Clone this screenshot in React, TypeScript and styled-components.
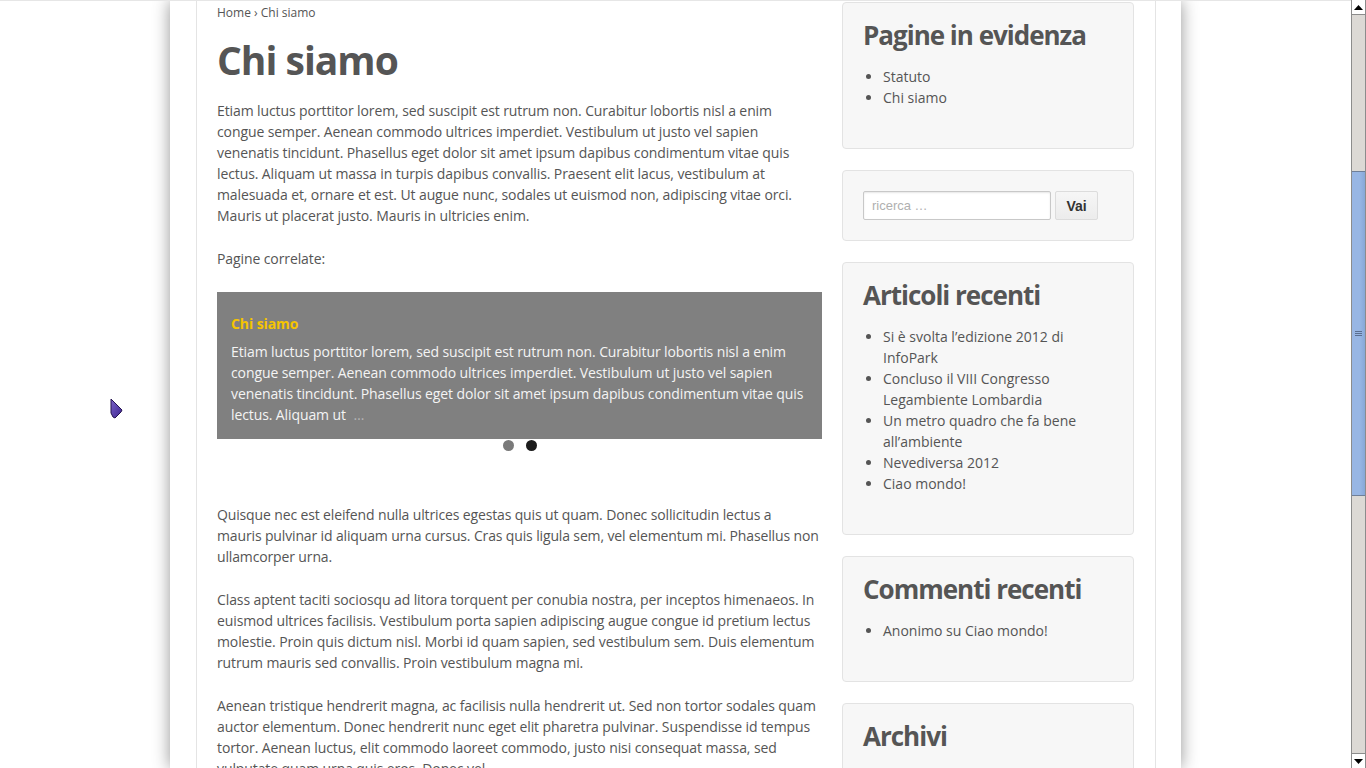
import React from "react";
import styled, { createGlobalStyle } from "styled-components";

const GlobalStyle = createGlobalStyle`
  html, body {
    margin: 0;
    padding: 0;
    height: 768px;
    overflow: hidden;
    background: #ffffff;
  }
  body {
    font-family: "Open Sans", "DejaVu Sans", sans-serif;
    color: #555555;
  }
  * { box-sizing: border-box; }
`;

const Screen = styled.div`
  display: flex;
  flex-direction: row;
  width: 1366px;
  height: 768px;
  position: relative;
`;

const Viewport = styled.div`
  flex: 1;
  display: flex;
  justify-content: center;
  border-top: 1px solid #e6e6e6;
  overflow: hidden;
  background: #ffffff;
`;

const Shell = styled.div`
  width: 1011px;
  padding: 0 25px 0 26px;
  background: #ffffff;
  box-shadow: 0 0 16px rgba(0, 0, 0, 0.42);
  flex-shrink: 0;
`;

const Inner = styled.div`
  display: flex;
  flex-direction: row;
  gap: 20px;
  width: 960px;
  height: 100%;
  padding-left: 20px;
  border-left: 1px solid #e4e4e4;
  border-right: 1px solid #e4e4e4;
`;

const Main = styled.main`
  width: 605px;
  flex-shrink: 0;
  font-size: 14px;
  line-height: 21px;
`;

const Breadcrumb = styled.div`
  margin-top: 3px;
  font-size: 12px;
  line-height: 18px;
  color: #555;
`;

const Title = styled.h1`
  margin: 14px 0 0;
  font-size: 39px;
  line-height: 48px;
  font-weight: 700;
  letter-spacing: -1px;
  color: #555;
`;

const Para = styled.p<{ $first?: boolean; $tight?: boolean }>`
  margin: ${(p) => (p.$first ? "16px" : "0")} 0 22px;
  letter-spacing: ${(p) => (p.$tight ? "-0.14px" : "-0.1px")};
`;

const Slide = styled.div`
  margin-top: 23px;
  background: #808080;
  padding: 21px 14px 14px;
  color: #f4f4f4;
  letter-spacing: -0.1px;
`;

const SlideTitle = styled.div`
  color: #f5c400;
  font-weight: 700;
  margin-bottom: 7px;
`;

const More = styled.span`
  color: #b5b5b5;
  margin-left: 4px;
`;

const Dots = styled.div`
  display: flex;
  justify-content: center;
  gap: 12px;
  margin: 1px 0 53px;
`;

const Dot = styled.span<{ $active?: boolean }>`
  width: 11px;
  height: 11px;
  border-radius: 50%;
  background: ${(p) => (p.$active ? "#1c1c1c" : "#7a7a7a")};
`;

const Sidebar = styled.aside`
  width: 292px;
  flex-shrink: 0;
  padding-top: 1px;
  display: flex;
  flex-direction: column;
  gap: 21px;
`;

const Widget = styled.section`
  background: #f7f7f7;
  border: 1px solid #e3e3e3;
  border-radius: 4px;
  padding: 20px 20px 20px;
`;

const WidgetTitle = styled.h3`
  margin: 1px 0 20px;
  font-size: 26px;
  line-height: 22px;
  font-weight: 700;
  letter-spacing: -1px;
  color: #555;
`;

const List = styled.ul`
  margin: 0 0 20px;
  padding-left: 20px;
  font-size: 14px;
  line-height: 21px;
  color: #555;
  list-style: disc;
`;

const SearchRow = styled.form`
  display: flex;
  gap: 4px;
  align-items: stretch;
`;

const SearchInput = styled.input`
  width: 188px;
  height: 29px;
  border: 1px solid #c8c8c8;
  border-radius: 2px;
  box-shadow: inset 0 1px 2px rgba(0, 0, 0, 0.1);
  padding: 0 8px;
  font-family: "Liberation Sans", Arial, sans-serif;
  font-size: 13px;
  color: #555;
  background: #fff;
  &::placeholder { color: #b0b0b0; }
`;

const SearchButton = styled.button`
  width: 43px;
  height: 29px;
  border: 1px solid #dcdcdc;
  border-radius: 2px;
  background: linear-gradient(#f6f6f6, #ececec);
  font-family: "Liberation Sans", Arial, sans-serif;
  font-weight: 700;
  font-size: 14px;
  color: #333;
  padding: 0;
`;

const Scrollbar = styled.div`
  width: 15px;
  display: flex;
  flex-direction: column;
  background: #dcd9d5;
  border-left: 1px solid #8c8c8c;
  border-right: 1px solid #8c8c8c;
`;

const ArrowButton = styled.div`
  height: 15px;
  background: #ffffff;
  display: flex;
  align-items: center;
  justify-content: center;
  border-bottom: 1px solid #8c8c8c;
  &:last-child {
    border-bottom: none;
    border-top: 1px solid #8c8c8c;
  }
`;

const Track = styled.div`
  flex: 1;
  padding-top: 156px;
`;

const Thumb = styled.div`
  height: 325px;
  background: linear-gradient(90deg, #98b6e4 0%, #98b6e4 60%, #88a8d8 100%);
  border-top: 1px solid #6f7f99;
  border-bottom: 1px solid #6f7f99;
  display: flex;
  align-items: center;
  justify-content: center;
`;

const Cursor = styled.svg`
  position: absolute;
  left: 108px;
  top: 397px;
`;

const Grip = () => (
  <svg width="7" height="6" viewBox="0 0 7 6">
    <path d="M0 0.5H7M0 2.5H7M0 4.5H7" stroke="#5a6e90" strokeWidth="1" />
  </svg>
);

export default function App() {
  return (
    <>
      <GlobalStyle />
      <Screen>
        <Viewport>
          <Shell>
            <Inner>
              <Main>
                <Breadcrumb>Home › Chi siamo</Breadcrumb>
                <Title>Chi siamo</Title>
                <Para $first>
                  Etiam luctus porttitor lorem, sed suscipit est rutrum non. Curabitur lobortis nisl a enim
                  congue semper. Aenean commodo ultrices imperdiet. Vestibulum ut justo vel sapien
                  venenatis tincidunt. Phasellus eget dolor sit amet ipsum dapibus condimentum vitae quis
                  lectus. Aliquam ut massa in turpis dapibus convallis. Praesent elit lacus, vestibulum at
                  malesuada et, ornare et est. Ut augue nunc, sodales ut euismod non, adipiscing vitae orci.
                  Mauris ut placerat justo. Mauris in ultricies enim.
                </Para>
                <Para>Pagine correlate:</Para>
                <Slide>
                  <SlideTitle>Chi siamo</SlideTitle>
                  <div>
                    Etiam luctus porttitor lorem, sed suscipit est rutrum non. Curabitur lobortis nisl a enim
                    congue semper. Aenean commodo ultrices imperdiet. Vestibulum ut justo vel sapien
                    venenatis tincidunt. Phasellus eget dolor sit amet ipsum dapibus condimentum vitae quis
                    lectus. Aliquam ut <More>…</More>
                  </div>
                </Slide>
                <Dots>
                  <Dot />
                  <Dot $active />
                </Dots>
                <Para $tight>
                  Quisque nec est eleifend nulla ultrices egestas quis ut quam. Donec sollicitudin lectus a
                  <br />
                  mauris pulvinar id aliquam urna cursus. Cras quis ligula sem, vel elementum mi. Phasellus non
                  ullamcorper urna.
                </Para>
                <Para>
                  Class aptent taciti sociosqu ad litora torquent per conubia nostra, per inceptos himenaeos. In
                  euismod ultrices facilisis. Vestibulum porta sapien adipiscing augue congue id pretium lectus
                  molestie. Proin quis dictum nisl. Morbi id quam sapien, sed vestibulum sem. Duis elementum
                  rutrum mauris sed convallis. Proin vestibulum magna mi.
                </Para>
                <Para>
                  Aenean tristique hendrerit magna, ac facilisis nulla hendrerit ut. Sed non tortor sodales quam
                  auctor elementum. Donec hendrerit nunc eget elit pharetra pulvinar. Suspendisse id tempus
                  tortor. Aenean luctus, elit commodo laoreet commodo, justo nisi consequat massa, sed
                  vulputate quam urna quis eros. Donec vel.
                </Para>
              </Main>
              <Sidebar>
                <Widget>
                  <WidgetTitle>Pagine in evidenza</WidgetTitle>
                  <List>
                    <li>Statuto</li>
                    <li>Chi siamo</li>
                  </List>
                </Widget>
                <Widget>
                  <SearchRow onSubmit={(e) => e.preventDefault()}>
                    <SearchInput placeholder="ricerca …" />
                    <SearchButton type="submit">Vai</SearchButton>
                  </SearchRow>
                </Widget>
                <Widget>
                  <WidgetTitle>Articoli recenti</WidgetTitle>
                  <List>
                    <li>Si è svolta l’edizione 2012 di InfoPark</li>
                    <li>Concluso il VIII Congresso Legambiente Lombardia</li>
                    <li>Un metro quadro che fa bene all’ambiente</li>
                    <li>Nevediversa 2012</li>
                    <li>Ciao mondo!</li>
                  </List>
                </Widget>
                <Widget>
                  <WidgetTitle>Commenti recenti</WidgetTitle>
                  <List>
                    <li>Anonimo su Ciao mondo!</li>
                  </List>
                </Widget>
                <Widget>
                  <WidgetTitle>Archivi</WidgetTitle>
                  <List>
                    <li>novembre 2012</li>
                  </List>
                </Widget>
              </Sidebar>
            </Inner>
          </Shell>
        </Viewport>
        <Scrollbar>
          <ArrowButton>
            <svg width="9" height="5" viewBox="0 0 9 5">
              <path d="M0 5L4.5 0L9 5Z" fill="#000" />
            </svg>
          </ArrowButton>
          <Track>
            <Thumb>
              <Grip />
            </Thumb>
          </Track>
          <ArrowButton>
            <svg width="9" height="5" viewBox="0 0 9 5">
              <path d="M0 0L4.5 5L9 0Z" fill="#000" />
            </svg>
          </ArrowButton>
        </Scrollbar>
        <Cursor width="16" height="24" viewBox="0 0 16 24">
          <defs>
            <linearGradient id="cg" x1="0" y1="0" x2="1" y2="1">
              <stop offset="0" stopColor="#7a62c8" />
              <stop offset="1" stopColor="#3d2590" />
            </linearGradient>
          </defs>
          <polygon
            points="3,2 14,13 13,15 7,21 5,20 3,16"
            fill="url(#cg)"
            stroke="#24124f"
            strokeWidth="1"
            strokeLinejoin="round"
          />
        </Cursor>
      </Screen>
    </>
  );
}
